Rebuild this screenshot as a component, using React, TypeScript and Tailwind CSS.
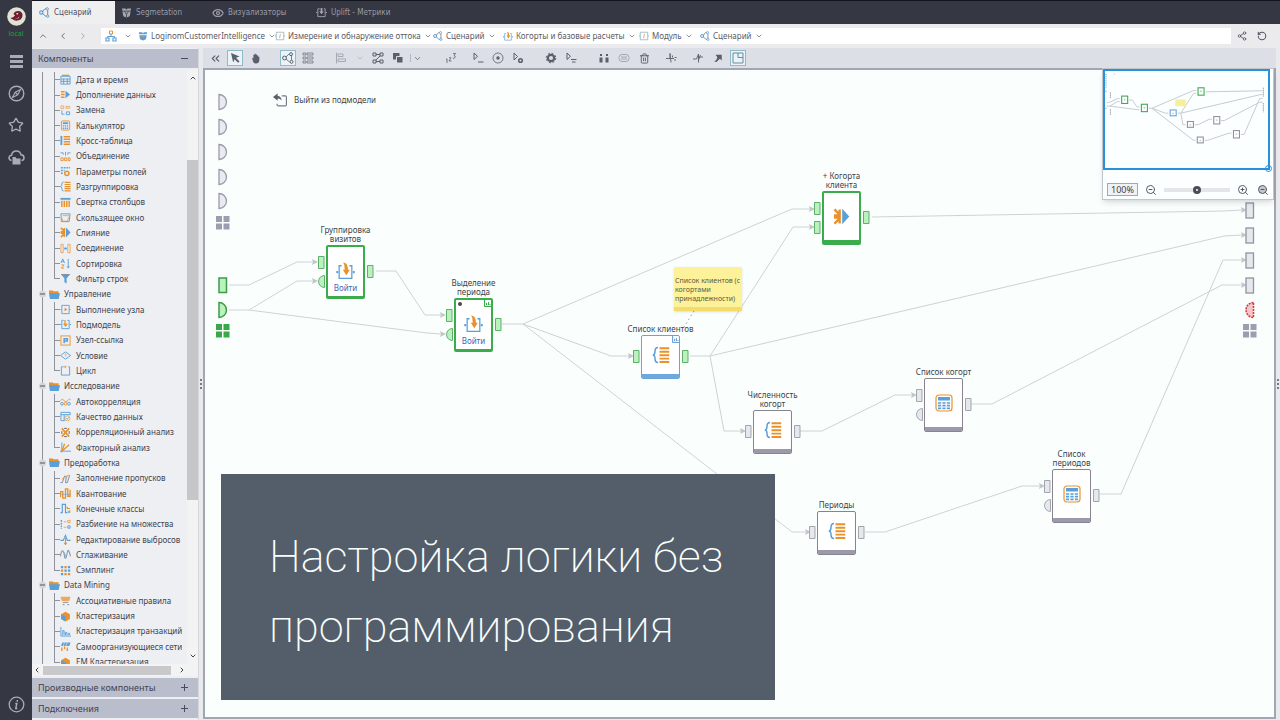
import type { ReactNode } from "react";
import { useState } from "react";
import {
  ChevronDown,
  ChevronLeft,
  ChevronRight,
  ChevronUp,
  ChevronsLeft,
  Eye,
  RotateCcw,
  Share2,
  Star,
  Trash2,
  ZoomIn,
  ZoomOut,
} from "lucide-react";

const B = "#5a9fd8";
const O = "#e8922e";
const G = "#5b5e6b";

function Svg({ children, size = 12 }: { children: ReactNode; size?: number }) {
  return (
    <svg width={size} height={size} viewBox="0 0 12 12" fill="none" className="shrink-0" aria-hidden="true">
      {children}
    </svg>
  );
}

/* ---------- icons, all on a 12x12 grid ---------- */

const icons: Record<string, ReactNode> = {
  date: (
    <>
      <path d="M1 2.5h10v8.5h-10zM1 5.5h10M1 8h10M4 5v6M8 5v6" stroke={B} />
      <path d="M2 1.5h8" stroke={O} strokeWidth="1.5" />
    </>
  ),
  enrich: (
    <>
      <path d="M1 3h4M1 6h4M1 9h4" stroke={O} strokeWidth="1.6" />
      <path d="M6 2l5 4-5 4z" fill={B} />
    </>
  ),
  replace: (
    <>
      <path d="M1 1h3v3h-3zM6.5 1.5h4v2h-4z" stroke={O} opacity=".7" />
      <path d="M2 6v4h3M7 7.5h3.5v3h-3.5z" stroke={B} />
    </>
  ),
  calc: (
    <>
      <rect x="1.5" y="1" width="9" height="10" rx="1" stroke={O} />
      <path d="M3 3.5h6" stroke={B} strokeWidth="2" />
      <path d="M3 6.5h6M3 9h6" stroke={B} strokeDasharray="1.5 .7" strokeWidth="1.4" />
    </>
  ),
  cross: (
    <>
      <path d="M1.5 1v10" stroke={B} strokeWidth="2" />
      <path d="M4 2h7M4 4.7h7M4 7.4h7M4 10h7" stroke={O} strokeWidth="1.6" />
    </>
  ),
  union: (
    <>
      <path d="M.5 2h3v2M11.5 2h-3v2M6 1v4" stroke={B} />
      <path d="M1 7.5h2.5v3h-2.5zM5 7.5h2.5v3h-2.5zM9 7.5h2v3h-2z" stroke={O} />
    </>
  ),
  fields: (
    <>
      <path d="M1 2h10M1 5h4M1 8h3" stroke={B} strokeWidth="1.6" strokeDasharray="2 1" />
      <circle cx="7.5" cy="8" r="2.3" stroke={O} strokeWidth="1.6" />
    </>
  ),
  ungroup: (
    <>
      <path d="M4 1q-2 0-2 2.5t-1.5 2.5q1.5 0 1.5 2.5t2 2.5" stroke={B} />
      <path d="M5 1.5h6.5M5 3.8h6.5M5 6.1h6.5M5 8.4h6.5M5 10.7h6.5" stroke={O} strokeWidth="1.3" />
    </>
  ),
  fold: (
    <>
      <path d="M.5 2h11" stroke={B} strokeWidth="2" />
      <path d="M2 4v7M4.7 4v7M7.4 4v7M10 4v7" stroke={O} strokeWidth="1.6" />
    </>
  ),
  window: (
    <>
      <path d="M1 2h10l-1 8.5h-8.5z" stroke={B} />
      <path d="M3 4h7M2 6l1 4h5l2-5" stroke={O} opacity=".8" />
    </>
  ),
  merge: (
    <>
      <path d="M1 1l3.5 3.5M4.7 1v4.2h-4M1 11l3.5-3.5M4.7 11v-4.2h-4" stroke={O} strokeWidth="1.7" />
      <path d="M6.5.5l5 5.5-5 5.5z" fill={B} />
    </>
  ),
  join: (
    <>
      <path d="M1 1.5h2.5v9h-2.5zM8.5 1.5h2.5v9h-2.5z" stroke={O} opacity=".8" />
      <path d="M4.5 6h3" stroke={B} strokeWidth="2" />
    </>
  ),
  sort: (
    <>
      <path d="M1 5.5l2-4.5 2 4.5M1.7 4h2.6" stroke={B} />
      <path d="M1.5 7.5h3l-3 3.5h3" stroke={O} />
      <path d="M9 1v9.5M7.7 9l1.3 2 1.3-2" stroke={B} />
    </>
  ),
  filter: (
    <>
      <path d="M1 1h10l-3.8 5v5.5l-2.4-1.5v-4z" fill={B} />
      <path d="M1 1h10l-1.5 2h-7z" fill="#8b8f9c" />
    </>
  ),
  exec: (
    <>
      <path d="M4 1.5h-2v9h2M8 1.5h2v9h-2M.5 6h1M10.5 6h1M4 1.5h4M4 10.5h4" stroke={B} />
      <path d="M5 4l3 2-3 2z" fill={O} />
    </>
  ),
  submodel: (
    <>
      <path d="M4 1.5h-2v9h8v-9h-2M0 6h1.5M10.5 6h1.5" stroke={B} />
      <path d="M5.5 1v6M4 5l2 2.5 2-2.5" stroke={O} strokeWidth="1.4" />
    </>
  ),
  link: (
    <>
      <rect x="1" y="1" width="10" height="10" stroke={O} />
      <path d="M4.5 9v-5h3.5v2.5h-3" stroke={B} strokeWidth="1.6" />
    </>
  ),
  cond: (
    <>
      <path d="M6 2l5.5 4-5.5 4-5.5-4z" stroke={B} />
      <path d="M5 5q1-1.5 2 0-1 1-1 2" stroke={O} strokeWidth=".8" />
    </>
  ),
  cycle: (
    <>
      <path d="M4 2h-2.5v9h9v-9h-1.5" stroke={B} />
      <path d="M5 .5l2.5 1.5-2.5 1.5z" fill={O} />
    </>
  ),
  autocorr: (
    <>
      <path d="M.5 5q2-3 4 0t4 0 3-1" stroke={O} />
      <circle cx="2.2" cy="8.5" r="1.5" stroke={B} />
      <circle cx="6" cy="8.5" r="1.5" stroke={O} />
      <circle cx="9.8" cy="8.5" r="1.5" stroke={B} />
    </>
  ),
  quality: (
    <>
      <path d="M11 4.5v-3h-10v9h4M1 4h10M4.5 4v6.5" stroke={B} />
      <circle cx="8" cy="8" r="2.8" stroke={O} opacity=".7" />
      <path d="M6.8 8l1 1 1.7-2" stroke={B} />
    </>
  ),
  corr: (
    <>
      <path d="M2 1.5l8 9M10 1.5l-8 9" stroke={O} strokeWidth="1.8" />
      <path d="M4.5 1.5h3M4.5 10.5h3M2 4.5v3M10 4.5v3" stroke={G} />
    </>
  ),
  factor: (
    <>
      <path d="M2 .5v11M0 10h12" stroke={B} />
      <path d="M2 10l8-7M2 10l3-8" stroke={O} strokeWidth="1.4" />
    </>
  ),
  fill: (
    <>
      <path d="M.5 10.5h2l2.5-7h2l-1 7h2l2.5-8" stroke="#7c8796" />
      <path d="M7 4l3-2M2 7l2-2" stroke={O} />
    </>
  ),
  quant: (
    <>
      <path d="M.5 10v-6h2.5v7h3v-10h2.5v8h2.5v-7" stroke={O} strokeWidth="1.5" />
      <path d="M1 7h10" stroke={B} strokeWidth=".6" />
    </>
  ),
  classes: (
    <>
      <path d="M.5 10.5h2v-9h3.5v9h2" stroke={B} strokeWidth="1.3" />
      <path d="M8 4v2h3M10.5 8v3" stroke={O} strokeWidth="1.3" />
      <path d="M9 8.5v2.5" stroke={B} />
    </>
  ),
  split: (
    <>
      <path d="M1.5 1v10" stroke={B} strokeWidth="1.5" strokeDasharray="2 1" />
      <path d="M4 3h3M4 9h3M8.5 1.5h2.5v2.5h-2.5z" stroke={O} opacity=".8" />
      <path d="M8.5 7.5h2.5v2.5h-2.5z" stroke={B} />
    </>
  ),
  outlier: (
    <>
      <path d="M.5 7h3l2.5-5.5 2 5.5h3.5" stroke={B} strokeWidth="1.2" />
      <path d="M6 4v7.5M4.5 9.5l1.5 2 1.5-2" stroke={O} strokeWidth="1.2" />
    </>
  ),
  smooth: (
    <>
      <path d="M.5 8q1-7 2.5-6t2 7q1.5 3 2.5-3t2-4 2 6" stroke="#8b98a8" strokeWidth="1.2" />
      <path d="M4 3l3 6" stroke={B} strokeWidth=".8" />
    </>
  ),
  sampling: (
    <>
      <path d="M1 1h2.5v2.5h-2.5zM4.8 4.8h2.5v2.5h-2.5zM8.6 1h2.5v2.5h-2.5zM1 8.6h2.5v2.5h-2.5zM8.6 4.8h2.5v2.5h-2.5z" fill={B} />
      <path d="M4.8 1h2.5v2.5h-2.5zM1 4.8h2.5v2.5h-2.5zM4.8 8.6h2.5v2.5h-2.5zM8.6 8.6h2.5v2.5h-2.5z" fill={O} />
    </>
  ),
  assoc: (
    <>
      <path d="M.5 2h11l-1.5 4.5h-8z" fill={O} opacity=".75" />
      <path d="M3 8h6M3 10.5h2M8 10.5h2" stroke="#7c8796" />
    </>
  ),
  cluster: (
    <>
      <path d="M6 .8l4.8 2.7v5.2l-4.8 2.7-4.8-2.7v-5.2z" fill={O} />
      <path d="M1.2 3.5l4.8 2.5v5.4l-4.8-2.7z" fill={B} />
    </>
  ),
  transact: <path d="M1 1v10h11M3 10v-5h1.5v5M6 10v-3h1.5v3M9 10v-2h1.5v2" stroke={B} />,
  som: (
    <>
      <path d="M2.5 1.5h9l-1.5 4h-9z" fill={B} />
      <path d="M2 7v4M5 6v3M8 7v4" stroke={O} strokeWidth="1.5" />
      <path d="M5 1.5l-1.5 4M8 1.5l-1.5 4" stroke="#fff" strokeWidth=".6" />
    </>
  ),
  folder: (
    <>
      <path d="M0 1.5h4l1 1h5.5v3h-10.5z" fill={O} />
      <path d="M0 4.5h12l-1.5 6.5h-9.5z" fill={B} />
    </>
  ),
  scenario: (
    <>
      <circle cx="2.5" cy="6" r="1.8" stroke={B} strokeWidth="1.2" />
      <circle cx="9" cy="2" r="1.3" stroke={B} />
      <circle cx="9.5" cy="10" r="1.3" stroke={B} />
      <path d="M4 5l2.5-3h1M4 7l3 3h1M9.5 3.5v5" stroke={G} strokeWidth=".8" />
    </>
  ),
  pack: (
    <>
      <path d="M1 1.5h4l1 1.5 1-1.5h4l-.5 2.5h-9z" fill={B} />
      <path d="M1.5 5h9l-1 5-3.5 1.5-3.5-1.5z" fill={B} />
      <path d="M4 5l2 3 2-3" fill={O} />
    </>
  ),
  packGray: (
    <>
      <path d="M1 1.5h4l1 1.5 1-1.5h4l-.5 2.5h-9zM1.5 5h9l-1 5-3.5 1.5-3.5-1.5z" fill="#a3a5b0" />
      <path d="M4 5l2 3 2-3M6 8v3" stroke="#353743" strokeWidth=".8" />
    </>
  ),
  module: (
    <>
      <path d="M4 1.5h-2.5v9h2.5M8 1.5h2.5v9h-2.5M4 1.5h4M4 10.5h4M0 6h1.5M10.5 6h1.5" stroke="#8fb4c9" />
      <path d="M6.5 3.5l-1 5" stroke={O} strokeWidth=".9" />
    </>
  ),
  enter: (
    <>
      <path d="M3.5 3h-1.5v8h1.5M8.5 3h1.5v8h-1.5M3.5 11h5" stroke={B} strokeWidth=".8" />
      <path d="M.2 7h1.2M10.6 7h1.2" stroke={B} strokeWidth="1.4" />
      <path d="M4.5 1q3 0 3 4.5h1.3l-2.3 3.5-2.2-3.5h1.2q.3-3-1-4.5z" fill={O} />
    </>
  ),
  enterGray: (
    <>
      <path d="M4 2h-2v8.5h8v-8.5h-1.5M0 6h1.5M10.5 6h1.5" stroke="#a3a5b0" />
      <path d="M5 1h2v4h1.5l-2.5 3-2.5-3h1.5z" fill="#a3a5b0" />
    </>
  ),
  home: (
    <>
      <path d="M4.5 1h3v3h-3z" stroke={O} />
      <path d="M1 8h3v3h-3zM8 8h3v3h-3z" stroke={B} strokeWidth="1.2" />
      <path d="M6 4v2.5M2.5 8v-1.5h7v1.5" stroke={B} />
    </>
  ),
  cursor: <path d="M2 1l8.5 3.5-3.5 1.3 3.5 3.6-1.4 1.4-3.6-3.6-1.3 3.3z" fill={G} />,
  hand: <path d="M2.2 5l1.5 1v-4h1.3v-1.2h1.3v.8h1.3v1h1.3v1.5h1.3v4q-.5 3.3-3.5 3.3-3 0-3.5-2.5z" fill={G} />,
  graph: (
    <>
      <circle cx="2.5" cy="6" r="1.9" stroke={G} />
      <circle cx="9" cy="2.2" r="1.5" stroke={G} />
      <circle cx="9.5" cy="9.8" r="1.5" stroke={G} />
      <path d="M4 5l3-3M4 7l3.5 3M9.5 4v4" stroke={G} strokeWidth=".8" />
    </>
  ),
  table: <path d="M1 1h3v2h-3zM5 1h6v2h-6zM1 5h3v2h-3zM5 5h6v2h-6zM1 9h3v2h-3zM5 9h6v2h-6z" stroke="#7d808c" strokeWidth=".9" />,
  align: <path d="M1.5 .5v11M3 2h5v2.5h-5zM3 7h7.5v2.5h-7.5z" stroke="#a6a9b3" />,
  nodes: <path d="M1 1h3v3h-3zM8 1h3v3h-3zM1 8h3v3h-3zM8 8h3v3h-3zM4 2.5h4M4 9.5h4M4 8l4-4" stroke={G} />,
  layers: (
    <>
      <path d="M1 1h6.5v6.5h-6.5z" fill={G} />
      <path d="M4.5 4.5h6.5v6.5h-6.5z" fill={G} stroke="#dcdfe6" />
    </>
  ),
  renum: <path d="M1 7.5l1-.7v4.2M4 6q1.5-1.5 2 0l-2 3h2.5M8 1.5h2.5l-1.5 2q2 .5 1 2t-2.2.5" stroke={G} strokeWidth=".8" />,
  run: <path d="M2 1v6.5l3.5-3.2zM6 10h5.5" stroke={G} />,
  target: (
    <>
      <circle cx="6" cy="6" r="5" stroke={G} strokeWidth=".8" />
      <circle cx="6" cy="6" r="1.7" fill={G} />
    </>
  ),
  runGear: (
    <>
      <path d="M2 1v7l3.5-3.5z" stroke={G} />
      <circle cx="8.5" cy="8.5" r="1.8" stroke={G} strokeWidth="1.5" />
    </>
  ),
  gear: (
    <>
      <circle cx="6" cy="6" r="3.2" stroke={G} strokeWidth="2.2" />
      <circle cx="6" cy="6" r="4.8" stroke={G} strokeDasharray="1.9 1.87" />
    </>
  ),
  runOut: <path d="M2 1v6.5l3.5-3.2zM6 7.5h5.5M7 10h3.5" stroke={G} />,
  pair: <path d="M2 2h2v2h-2zM8 2h2v2h-2zM1.5 5.5h3v5h-3zM7.5 5.5h3v5h-3z" fill={G} />,
  ghost: (
    <>
      <rect x="1" y="2.5" width="10" height="7" rx="3" stroke="#a6a9b3" />
      <path d="M3 5h6M3 7h6" stroke="#a6a9b3" />
    </>
  ),
  spark: <path d="M1 6.5h4v-5l1 9M6 6.5h3M7.5 3.5v2M9 8h2M9.5 5.5h2" stroke={G} strokeWidth=".9" />,
  spark2: <path d="M1 7h3.5l2-5v8.5M6.5 5h4.5M8.5 3l-2 5" stroke={G} strokeWidth=".9" />,
  arrow: <path d="M3 2h7.5v7l-2.3-2.2-4 4-2.7-.5q3-1.5 3.7-5.3z" fill={G} />,
  minimap: <path d="M1 1h10v10h-10zM6 1v4.5h5" stroke="#6c8a9e" />,
  exit: (
    <>
      <path d="M7.5 2.5h3q1 0 1 1v6.500q0 1-1 1h-6q-1 0-1-1v-.8" stroke="#777b86" />
      <path d="M0 3.500l4-3v2q3 0 3.500 4-1.500-2-3.500-1.800v2z" fill={G} />
    </>
  ),
};

/* ---------- left tree ---------- */

type TreeItem = { icon: string; text: string; folder?: boolean; last?: boolean };

const tree: TreeItem[] = [
  { icon: "date", text: "Дата и время" },
  { icon: "enrich", text: "Дополнение данных" },
  { icon: "replace", text: "Замена" },
  { icon: "calc", text: "Калькулятор" },
  { icon: "cross", text: "Кросс-таблица" },
  { icon: "union", text: "Объединение" },
  { icon: "fields", text: "Параметры полей" },
  { icon: "ungroup", text: "Разгруппировка" },
  { icon: "fold", text: "Свертка столбцов" },
  { icon: "window", text: "Скользящее окно" },
  { icon: "merge", text: "Слияние" },
  { icon: "join", text: "Соединение" },
  { icon: "sort", text: "Сортировка" },
  { icon: "filter", text: "Фильтр строк", last: true },
  { icon: "folder", text: "Управление", folder: true },
  { icon: "exec", text: "Выполнение узла" },
  { icon: "submodel", text: "Подмодель" },
  { icon: "link", text: "Узел-ссылка" },
  { icon: "cond", text: "Условие" },
  { icon: "cycle", text: "Цикл", last: true },
  { icon: "folder", text: "Исследование", folder: true },
  { icon: "autocorr", text: "Автокорреляция" },
  { icon: "quality", text: "Качество данных" },
  { icon: "corr", text: "Корреляционный анализ" },
  { icon: "factor", text: "Факторный анализ", last: true },
  { icon: "folder", text: "Предоработка", folder: true },
  { icon: "fill", text: "Заполнение пропусков" },
  { icon: "quant", text: "Квантование" },
  { icon: "classes", text: "Конечные классы" },
  { icon: "split", text: "Разбиение на множества" },
  { icon: "outlier", text: "Редактирование выбросов" },
  { icon: "smooth", text: "Сглаживание" },
  { icon: "sampling", text: "Сэмплинг", last: true },
  { icon: "folder", text: "Data Mining", folder: true },
  { icon: "assoc", text: "Ассоциативные правила" },
  { icon: "cluster", text: "Кластеризация" },
  { icon: "transact", text: "Кластеризация транзакций" },
  { icon: "som", text: "Самоорганизующиеся сети" },
  { icon: "cluster", text: "EM Кластеризация", last: true },
];

function TreeRow({ item }: { item: TreeItem }) {
  if (item.folder) {
    return (
      <li className="flex flex-1 items-center">
        <span className="w-[17px] shrink-0 self-stretch pl-[10px]">
          <span className="relative block h-full border-l border-[#8f929b]">
            <button
              aria-label={`Свернуть ${item.text}`}
              className="absolute top-1/2 -left-1 flex size-[7px] -translate-y-1/2 items-center justify-center rounded-full bg-[#d5d7dc]"
            >
              <span className="h-px w-[5px] bg-[#555]" />
            </button>
          </span>
        </span>
        <span className="w-[15px] shrink-0">
          <Svg size={11}>{icons.folder}</Svg>
        </span>
        <span className="whitespace-nowrap">{item.text}</span>
      </li>
    );
  }
  return (
    <li className="flex flex-1 items-center">
      <span className="w-[22px] shrink-0 self-stretch pl-[10px]">
        <span className="block h-full border-l border-[#8f929b]" />
      </span>
      <span className="flex w-[6px] shrink-0 flex-col self-stretch">
        <span className="flex-1 border-b border-l border-[#8f929b]" />
        <span className={item.last ? "flex-1" : "flex-1 border-l border-[#8f929b]"} />
      </span>
      <span className="w-4 shrink-0">
        <Svg size={11}>{icons[item.icon]}</Svg>
      </span>
      <span className="whitespace-nowrap">{item.text}</span>
    </li>
  );
}

function PanelHeader({ title, open }: { title: string; open?: boolean }) {
  return (
    <button className="flex h-[19px] shrink-0 items-center justify-between bg-[#b9bdcc] pr-[10px] pl-[6px] text-[9px] text-[#3f424e]">
      <span>{title}</span>
      <span className="relative flex size-[7px] items-center justify-center">
        <span className="h-px w-[7px] bg-[#4a4d59]" />
        {!open && <span className="absolute h-[7px] w-px bg-[#4a4d59]" />}
      </span>
    </button>
  );
}

function ComponentsPanel() {
  return (
    <aside className="flex w-[167px] shrink-0 flex-col gap-[2px] border-r border-[#d5d7dd] bg-[#eeeff2] pt-px pb-[2px]">
      <PanelHeader title="Компоненты" open />
      <div className="flex min-h-0 flex-1">
        <div className="min-w-0 flex-1 overflow-hidden pt-[2px]">
          <ul className="flex h-[598px] flex-col text-[8px] leading-3 text-[#41434d]">
            {tree.map((item) => (
              <TreeRow key={item.text} item={item} />
            ))}
          </ul>
        </div>
        <div className="flex w-[11px] shrink-0 flex-col items-center bg-[#f3f3f4] py-1">
          <ChevronUp size={8} strokeWidth={3} color="#444" />
          <div className="mt-[78px] h-[340px] w-[11px] bg-[#c6c6c8]" />
          <div className="flex-1" />
          <ChevronDown size={8} strokeWidth={3} color="#444" />
        </div>
      </div>
      <div className="-mt-[2px] flex h-[12px] shrink-0 items-center gap-[2px] bg-[#f3f3f4] pr-3 pl-[1px]">
        <ChevronLeft size={8} strokeWidth={3} color="#444" />
        <div className="h-[9px] flex-1 bg-[#c9c9cb]" />
        <ChevronRight size={8} strokeWidth={3} color="#444" className="ml-[5px]" />
      </div>
      <PanelHeader title="Производные компоненты" />
      <PanelHeader title="Подключения" />
    </aside>
  );
}

/* ---------- top bars ---------- */

function Rail() {
  return (
    <nav className="flex w-8 shrink-0 flex-col items-center bg-[#353743] pt-[7px] text-[#a9abb5]">
      <svg width="19" height="19" viewBox="0 0 19 19" aria-hidden="true">
        <circle cx="9.5" cy="9.5" r="9.3" fill="#dfe3d3" />
        <path d="M3.5 11q3-.5 4.5-2.5l-1.5-1.5q1-3 5-3 4.5.8 4 5-.8 4-5 4.5-3 .5-5-1l3.5-.5q3-.5 3.5-2.5-2.5 2.5-5.5 2.8-2.5.2-3.5-1.3z" fill="#6f1c30" />
        <path d="M9 6.5q1.5-1 2.5.3l-1.3 1z" fill="#f3ede2" />
      </svg>
      <span className="mt-1 h-[8px] text-[7px] leading-[8px] text-[#21a045]">local</span>
      <div className="mt-[7px] flex flex-1 flex-col items-center">
        <button aria-label="Меню" className="flex size-8 flex-col items-center justify-center gap-[2px]">
          <span className="h-[3px] w-[13px] bg-current" />
          <span className="h-[3px] w-[13px] bg-current" />
          <span className="h-[3px] w-[13px] bg-current" />
        </button>
        <button aria-label="Обзор" className="flex size-8 items-center justify-center">
          <svg width="17" height="17" viewBox="0 0 17 17" fill="none" stroke="currentColor" aria-hidden="true">
            <circle cx="8.5" cy="8.5" r="7.3" strokeWidth="1.4" />
            <path d="M12.5 4.5l-2.7 5.3-5.3 2.7 2.7-5.3zM7.5 7.5l2 2" strokeWidth="1.1" />
          </svg>
        </button>
        <button aria-label="Избранное" className="flex size-8 items-center justify-center">
          <Star size={16} strokeWidth={2} />
        </button>
        <button aria-label="Файлы" className="flex size-8 items-center justify-center">
          <svg width="17" height="17" viewBox="0 0 17 17" fill="none" stroke="currentColor" strokeWidth="1.5" aria-hidden="true">
            <path d="M3.5 11.5q-2.7-.5-2.5-3 .5-2 2.5-2.2.7-4.3 4.8-4.3 3.8 0 4.7 3.7 3 .3 3 3 0 2.5-2.5 2.8" />
            <path d="M4.5 8h3l1 1.5h4v6h-8z" fill="currentColor" stroke="none" />
          </svg>
        </button>
      </div>
      <button aria-label="О программе" className="flex size-8 items-center justify-center">
        <svg width="17" height="17" viewBox="0 0 17 17" fill="none" stroke="currentColor" aria-hidden="true">
          <circle cx="8.5" cy="8.5" r="7.3" strokeWidth="1.3" />
          <path d="M9.3 4v1.8M7.3 7.5h1.5l-1 5h1.5" strokeWidth="1.5" />
        </svg>
      </button>
    </nav>
  );
}

const tabs = [
  { text: "Сценарий", icon: "scenario", cls: "w-[83px] pl-[7px]" },
  { text: "Segmetation", icon: "packGray", cls: "w-[91px] pl-[6px]" },
  { text: "Визуализаторы", icon: "eye", cls: "w-[104px] pl-[6px]" },
  { text: "Uplift - Метрики", icon: "enterGray", cls: "w-[104px] pl-[6px]" },
];

function TabBar() {
  const [active, setActive] = useState(0);
  return (
    <div className="flex h-6 shrink-0 border-t border-[#14141c] bg-[#353743] font-['DejaVu_Sans_Condensed'] text-[8px]">
      {tabs.map((tab, i) => (
        <button
          key={tab.text}
          onClick={() => setActive(i)}
          className={`flex items-center gap-1 whitespace-nowrap ${tab.cls} ${
            i === active ? "bg-[#efeff0] text-[#4a4c55]" : "text-[#9a9ca7]"
          }`}
        >
          {tab.icon === "eye" ? <Eye size={12} strokeWidth={2.5} /> : <Svg size={11}>{icons[tab.icon]}</Svg>}
          {tab.text}
        </button>
      ))}
    </div>
  );
}

const crumbs = [
  { text: "LoginomCustomerIntelligence", icon: "pack", cls: "w-[137px]" },
  { text: "Измерение и обнаружение оттока", icon: "module", cls: "w-[158px]" },
  { text: "Сценарий", icon: "scenario", cls: "w-[70px]" },
  { text: "Когорты и базовые расчеты", icon: "enter", cls: "w-[136px]" },
  { text: "Модуль", icon: "module", cls: "w-[61px]" },
  { text: "Сценарий", icon: "scenario", cls: "w-[70px]" },
];

function Breadcrumbs() {
  return (
    <div className="flex h-6 shrink-0 items-center bg-[#ebebed] text-[8px] text-[#5a5c66]">
      <div className="flex w-[69px] shrink-0 items-center gap-[10px] pl-[6px] text-[#555863]">
        <ChevronUp size={10} />
        <ChevronLeft size={10} />
        <ChevronRight size={10} color="#9a9ca5" />
      </div>
      <nav className="flex h-4 min-w-0 flex-1 items-center bg-white pl-1">
        <a href="#root" aria-label="Пакеты" className="flex w-[33px] shrink-0 items-center gap-[7px]">
          <Svg size={12}>{icons.home}</Svg>
          <ChevronDown size={8} />
        </a>
        {crumbs.map((c, i) => (
          <a key={i} href="#crumb" className={`flex shrink-0 items-center gap-[3px] whitespace-nowrap ${c.cls}`}>
            <Svg size={10}>{icons[c.icon]}</Svg>
            <span className="flex-1">{c.text}</span>
            <ChevronDown size={8} className="mr-[7px] shrink-0" />
          </a>
        ))}
      </nav>
      <div className="flex w-[49px] shrink-0 items-center gap-[10px] pl-[6px] text-[#555863]">
        <Share2 size={10} />
        <RotateCcw size={10} strokeWidth={2.5} />
      </div>
    </div>
  );
}

function Tool({ label, boxed, children }: { label: string; boxed?: boolean; children: ReactNode }) {
  return (
    <button
      aria-label={label}
      className={`flex size-4 shrink-0 items-center justify-center ${boxed ? "border border-[#8fbccb] bg-[#eaf3f7]" : ""}`}
    >
      {children}
    </button>
  );
}

function Group({ children }: { children: ReactNode }) {
  return <div className="flex items-center gap-1">{children}</div>;
}

function Toolbar() {
  return (
    <div className="flex h-5 shrink-0 items-center gap-[17px] bg-[#dcdfe6] pl-1 text-[#5b5e6b]">
      <Group>
        <Tool label="Скрыть панель"><ChevronsLeft size={13} /></Tool>
        <Tool label="Выделение" boxed><Svg>{icons.cursor}</Svg></Tool>
        <Tool label="Перемещение"><Svg size={11}>{icons.hand}</Svg></Tool>
      </Group>
      <Group>
        <Tool label="Граф" boxed><Svg>{icons.graph}</Svg></Tool>
        <Tool label="Таблица"><Svg>{icons.table}</Svg></Tool>
      </Group>
      <Group>
        <Tool label="Выравнивание"><Svg>{icons.align}</Svg></Tool>
        <span className="flex w-[13px] justify-center"><ChevronDown size={8} color="#a6a9b3" /></span>
        <Tool label="Расположить"><Svg>{icons.nodes}</Svg></Tool>
        <Tool label="Слои"><Svg>{icons.layers}</Svg></Tool>
        <span className="flex w-4 items-center gap-[2px]">
          <span className="h-2 w-px bg-[#b4b7c0]" />
          <ChevronDown size={9} />
        </span>
      </Group>
      <div className="flex items-center gap-[11px]">
        <Tool label="Порядок"><Svg>{icons.renum}</Svg></Tool>
        <Group>
          <Tool label="Выполнить"><Svg>{icons.run}</Svg></Tool>
          <Tool label="Остановить"><Svg>{icons.target}</Svg></Tool>
          <Tool label="Переобучить"><Svg>{icons.runGear}</Svg></Tool>
        </Group>
      </div>
      <Group>
        <Tool label="Настройки"><Svg>{icons.gear}</Svg></Tool>
        <Tool label="Вывод"><Svg>{icons.runOut}</Svg></Tool>
      </Group>
      <div className="flex items-center gap-[11px]">
        <Group>
          <Tool label="Клонировать"><Svg>{icons.pair}</Svg></Tool>
          <Tool label="Свернуть в подмодель"><Svg>{icons.ghost}</Svg></Tool>
          <Tool label="Удалить"><Trash2 size={11} /></Tool>
        </Group>
        <Tool label="Порты"><Svg>{icons.spark}</Svg></Tool>
        <Group>
          <Tool label="Связи"><Svg>{icons.spark2}</Svg></Tool>
          <Tool label="Ссылка"><Svg size={10}>{icons.arrow}</Svg></Tool>
          <Tool label="Миникарта" boxed><Svg>{icons.minimap}</Svg></Tool>
        </Group>
      </div>
    </div>
  );
}

/* ---------- canvas ---------- */

type Tone = "green" | "blue" | "gray";

type GraphNode = {
  title: string[];
  x: number;
  y: number;
  h: number;
  tone: Tone;
  kind: "enter" | "ungroup" | "merge" | "calc";
  ports: ("rect" | "half")[];
  badge?: boolean;
  dot?: boolean;
};

const nodes: GraphNode[] = [
  { title: ["Группировка", "визитов"], x: 121, y: 175, h: 54, tone: "green", kind: "enter", ports: ["rect", "half"] },
  { title: ["Выделение", "периода"], x: 249, y: 228, h: 54, tone: "green", kind: "enter", ports: ["rect", "half"], badge: true, dot: true },
  { title: ["Список клиентов"], x: 436, y: 265, h: 44, tone: "blue", kind: "ungroup", ports: ["rect"], badge: true },
  { title: ["+ Когорта", "клиента"], x: 617, y: 121, h: 54, tone: "green", kind: "merge", ports: ["rect", "rect"] },
  { title: ["Численность", "когорт"], x: 548, y: 340, h: 44, tone: "gray", kind: "ungroup", ports: ["rect"] },
  { title: ["Список когорт"], x: 719, y: 308, h: 54, tone: "gray", kind: "calc", ports: ["rect", "half"] },
  { title: ["Периоды"], x: 612, y: 441, h: 44, tone: "gray", kind: "ungroup", ports: ["rect"] },
  { title: ["Список", "периодов"], x: 847, y: 399, h: 54, tone: "gray", kind: "calc", ports: ["rect", "half"] },
];

const edges = [
  "24,215 44,215 92,192 108,192",
  "24,240 44,240 92,211 108,211",
  "44,240 222,263 236,264",
  "171,201 191,201 220,245 236,245",
  "297,254 318,254 587,139 605,139",
  "318,254 406,286 424,286",
  "318,254 587,462 601,462",
  "485,286 505,286 588,157 605,157",
  "505,286 1019,166 1037,165",
  "505,286 519,361 536,361",
  "667,147 1019,141 1037,140",
  "595,361 617,361 690,325 707,325",
  "766,334 787,334 1017,215 1037,215",
  "660,462 680,462 817,416 835,416",
  "895,424 916,424 1018,190 1037,190",
];

const toneBorder: Record<Tone, string> = {
  green: "border-2 border-[#3aac4c]",
  blue: "border border-[#6ba3d8]",
  gray: "border border-[#85858f]",
};
const toneFoot: Record<Tone, string> = {
  green: "h-[3px] bg-[#3aac4c]",
  blue: "h-1 bg-[#6fa8dc]",
  gray: "h-1 bg-[#9a9aab]",
};
const toneStroke: Record<Tone, string> = { green: "#3aac4c", blue: "#6ba3d8", gray: "#92929f" };

function Port({ kind, green }: { kind: "rect" | "half"; green: boolean }) {
  const fill = green ? "#b9f2bd" : "#e6e8ee";
  const stroke = green ? "#5fae69" : "#a3a4ae";
  return (
    <svg width="7" height="13" viewBox="0 0 7 13" fill={fill} stroke={stroke} className="block" aria-hidden="true">
      {kind === "rect" ? <path d="M.5.5h5.5v12h-5.5z" /> : <path d="M6.5.5a6 6 0 0 0 0 12z" />}
    </svg>
  );
}

function NodeIcon({ kind }: { kind: GraphNode["kind"] }) {
  if (kind === "enter") return <Svg size={19}>{icons.enter}</Svg>;
  if (kind === "ungroup") return <Svg size={18}>{icons.ungroup}</Svg>;
  if (kind === "merge") return <Svg size={17}>{icons.merge}</Svg>;
  return (
    <svg width="18" height="18" viewBox="0 0 18 18" fill="none" aria-hidden="true">
      <rect x="1" y="1" width="16" height="16" rx="3" stroke={O} strokeWidth="1.2" />
      <path d="M3 3h12v3.5h-12z" fill={B} />
      <path d="M3 9h12M3 11.7h12M3 14.4h12" stroke={B} strokeWidth="1.7" strokeDasharray="3.2 1.2" />
    </svg>
  );
}

function NodeBox({ node }: { node: GraphNode }) {
  const tall = node.h > 50;
  const green = node.tone !== "gray";
  return (
    <div className="absolute" style={{ left: node.x, top: node.y }}>
      <div className="absolute bottom-full left-1/2 flex -translate-x-1/2 flex-col items-center pb-[2px] text-[8px] leading-[9px] whitespace-nowrap text-[#3d3f48]">
        {node.title.map((line) => (
          <span key={line}>{line}</span>
        ))}
      </div>
      <div className={`absolute right-full mr-px flex flex-col gap-[6px] ${tall ? "top-[11px]" : "top-[15px]"}`}>
        {node.ports.map((p, i) => (
          <Port key={i} kind={p} green={green} />
        ))}
      </div>
      <div className={`absolute left-full ml-[2px] ${tall ? "top-[20px]" : "top-[15px]"}`}>
        <Port kind="rect" green={green} />
      </div>
      <div
        className={`relative flex w-[39px] flex-col overflow-hidden rounded-[2px] bg-white ${toneBorder[node.tone]}`}
        style={{ height: node.h }}
      >
        {node.dot && <span className="absolute top-[2px] left-[2px] size-1 rounded-full bg-[#4a4a4a]" />}
        {node.badge && (
          <svg width="7" height="7" viewBox="0 0 7 7" className="absolute top-0 right-0" aria-hidden="true">
            <path d="M.5 0v6.5h6.5" fill="#e6f4ee" stroke={toneStroke[node.tone]} />
            <path d="M2.5 5v-2M4.5 5v-3M6 5v-1" stroke={toneStroke[node.tone]} />
          </svg>
        )}
        <div className="flex flex-1 flex-col items-center justify-center">
          {node.kind === "enter" ? (
            <div className="mt-[14px] flex flex-col items-center">
              <NodeIcon kind={node.kind} />
              <a href="#node" className="text-[8px] leading-4 text-[#3a66b5]">Войти</a>
            </div>
          ) : (
            <NodeIcon kind={node.kind} />
          )}
        </div>
        <div className={`shrink-0 ${toneFoot[node.tone]}`} />
      </div>
    </div>
  );
}

function Bricks({ color, x, y }: { color: string; x: number; y: number }) {
  return <path transform={`translate(${x} ${y})`} d="M0 0h6v6h-6zM7.5 0h6v6h-6zM0 7.5h6v6h-6zM7.5 7.5h6v6h-6z" fill={color} />;
}

function Wires() {
  return (
    <svg className="absolute top-0 left-0 h-full w-full" aria-hidden="true">
      <defs>
        <marker id="tip" viewBox="0 0 6 6" refX="1" refY="3" markerWidth="6" markerHeight="6">
          <path d="M0 0l6 3-6 3 1-3z" fill="#c3c5c9" />
        </marker>
      </defs>
      {edges.map((points) => (
        <polyline key={points} points={points} fill="none" stroke="#cfd2d5" markerEnd="url(#tip)" />
      ))}
      {[32, 57, 82, 107, 131].map((y) => (
        <path key={y} d={`M14 ${y - 7.5}a7.5 7.5 0 0 1 0 15z`} fill="#e9eaf2" stroke="#9a9ba9" strokeWidth="1.3" />
      ))}
      <Bricks color="#9d9db0" x={11} y={146} />
      <path d="M14 208h7.5v14.5h-7.5z" fill="#b9f2bd" stroke="#3f9a4c" strokeWidth="1.5" />
      <path d="M14 232.5a7.5 7.5 0 0 1 0 15z" fill="#b9f2bd" stroke="#3f9a4c" strokeWidth="1.5" />
      <Bricks color="#37a94a" x={11} y={254} />
      {[133, 158, 183, 208].map((y) => (
        <rect key={y} x="1041" y={y} width="7.5" height="15" fill="#e6e8ee" stroke="#9293a0" strokeWidth="1.3" />
      ))}
      <path d="M1048.5 232.5a7.5 7.5 0 0 0 0 15z" fill="#f7c5c5" stroke="#d8343c" strokeWidth="1.5" strokeDasharray="2 1" />
      <Bricks color="#9d9db0" x={1038} y={254} />
      <path d="M489 241l-10 16" stroke="#8fa0ae" strokeDasharray="1.5 3" />
    </svg>
  );
}

function Minimap() {
  return (
    <div className="absolute -top-[2px] right-0 flex w-[172px] flex-col border border-[#c2c5ca] bg-[#fbffff] shadow-md">
      <div className="relative mr-[3px] h-[101px] border-2 border-[#2a90d8]">
        <svg viewBox="14 12 1056 630" className="block h-full w-full" aria-hidden="true">
          {edges.map((points) => (
            <polyline key={points} points={points} fill="none" stroke="#c4c7ca" strokeWidth="6" />
          ))}
          {nodes.map((n) => (
            <g key={n.title[0] + n.x}>
              <rect x={n.x} y={n.y} width="39" height={n.h - 6} fill="#fff" stroke={toneStroke[n.tone]} strokeWidth="7" />
              <rect x={n.x + 14} y={n.y + 18} width="10" height="10" fill={toneStroke[n.tone]} opacity=".5" />
            </g>
          ))}
          <path d="M469 197h68v44h-68z" fill="#f6f09a" />
          <path d="M48 150v40M48 260v40M1041 120v60M1041 220v60" stroke="#85879a" strokeWidth="5" strokeDasharray="10 4" />
          <path d="M19 30v90M19 140v12M19 250v12" stroke="#5b9bb5" strokeWidth="6" strokeDasharray="8 6" />
          <circle cx="74" cy="32" r="4" fill="#b9bcc4" />
        </svg>
        <span className="absolute -right-1 -bottom-1 size-[7px] rounded-full border border-[#2a90d8]" />
      </div>
      <div className="flex h-[29px] items-center pt-[10px] pl-1 text-[#555863]">
        <input
          aria-label="Масштаб"
          defaultValue="100%"
          className="h-[13px] w-[31px] border border-[#a5a7ae] bg-[#f1f2f4] text-center text-[9px] text-[#3d3f48]"
        />
        <button aria-label="Уменьшить" className="ml-[7px]"><ZoomOut size={12} /></button>
        <div className="relative mr-[7px] ml-[7px] flex h-3 flex-1 items-center">
          <input type="range" aria-label="Уровень масштаба" defaultValue={50} className="absolute inset-0 w-full opacity-0" />
          <span className="h-1 w-full bg-[#e4e5e8]" />
          <span className="pointer-events-none absolute left-1/2 size-2 -translate-x-1/2 rounded-full border-[3px] border-[#4a4d59] bg-white" />
        </div>
        <button aria-label="Увеличить"><ZoomIn size={12} /></button>
        <button aria-label="Вписать" className="mr-[4px] ml-[8px]"><ZoomOut size={12} fill="#c4c6ce" /></button>
      </div>
    </div>
  );
}

function Canvas() {
  return (
    <main className="relative min-h-0 flex-1 border-2 border-[#a2a6b3] bg-[#fafffe]">
      <div className="absolute inset-0 overflow-hidden">
        <Wires />
        <a href="#exit" className="absolute top-[22px] left-[68px] flex items-center gap-[7px] text-[8px] leading-4 whitespace-nowrap text-[#3d3f48]">
          <Svg size={14}>{icons.exit}</Svg>
          Выйти из подмодели
        </a>
        {nodes.map((n) => (
          <NodeBox key={n.title[0] + n.x} node={n} />
        ))}
        <div className="absolute top-[197px] left-[469px] flex h-11 w-[68px] flex-col justify-between bg-[#fdf29a] shadow">
          <p className="pt-[9px] pl-px text-[7px] leading-[9px] whitespace-nowrap text-[#5c5a3c]">
            Список клиентов (с
            <br />
            когортами
            <br />
            принадлежности)
          </p>
          <div className="h-1 bg-[#f3dc6c]" />
        </div>
        <div className="absolute top-[404px] left-4 w-[554px] bg-[#4d5965]/97 px-12 pt-12 pb-[38px]">
          <h1 className="font-['Roboto'] text-[45px] leading-[70px] font-extralight whitespace-nowrap text-[#fafffe]">
            Настройка логики без
            <br />
            программирования
          </h1>
        </div>
      </div>
      <Minimap />
    </main>
  );
}

function Grip() {
  return (
    <div className="flex flex-col gap-[2px]">
      <span className="size-[2px] bg-[#777a86]" />
      <span className="size-[2px] bg-[#777a86]" />
      <span className="size-[2px] bg-[#777a86]" />
    </div>
  );
}

export default function App() {
  return (
    <div className="flex h-screen overflow-hidden bg-[#e9eaee] font-['Noto_Sans','Open_Sans',sans-serif]">
      <Rail />
      <div className="flex min-w-0 flex-1 flex-col">
        <TabBar />
        <Breadcrumbs />
        <div className="flex min-h-0 flex-1">
          <ComponentsPanel />
          <div className="flex w-1 shrink-0 items-center justify-center">
            <Grip />
          </div>
          <div className="flex min-w-0 flex-1 flex-col pb-px">
            <Toolbar />
            <Canvas />
          </div>
          <div className="flex w-1 shrink-0 items-center justify-center">
            <Grip />
          </div>
        </div>
      </div>
    </div>
  );
}
